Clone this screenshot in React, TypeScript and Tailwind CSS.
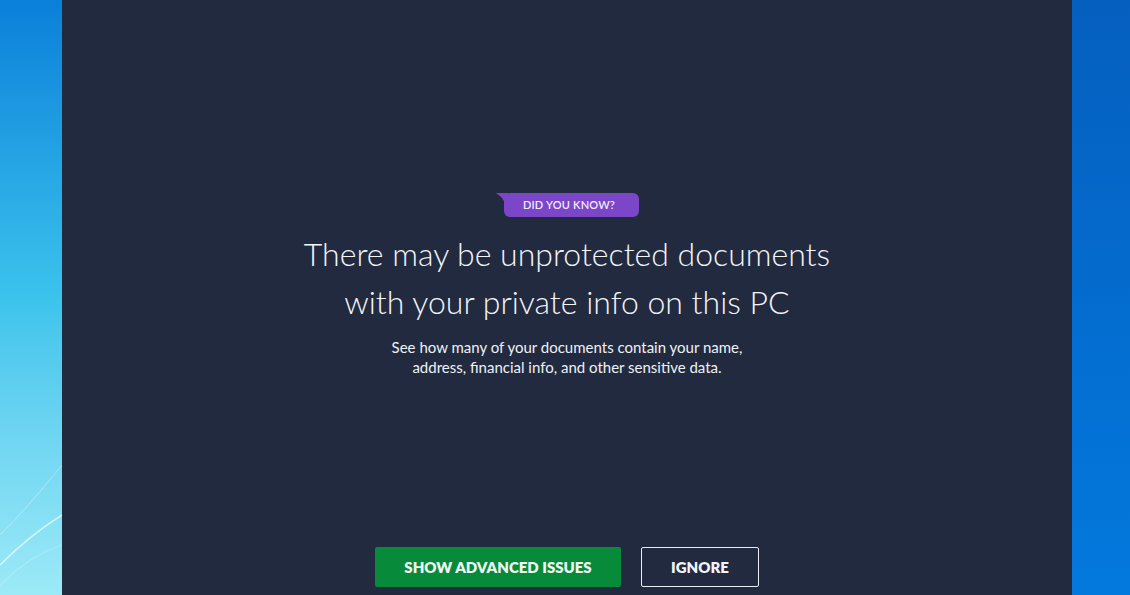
export default function App() {
  return (
    <div className="flex h-[595px] w-[1130px] overflow-hidden" style={{ fontFamily: "Lato, 'Open Sans', sans-serif" }}>
      {/* desktop left */}
      <div className="relative w-[62px] shrink-0 overflow-hidden bg-gradient-to-b from-[#0b7fd9] via-[#3cc3ec] to-[#9ceaf7]">
        <svg className="absolute bottom-0 left-0" width="62" height="200" viewBox="0 0 62 200">
          <path d="M0 170 Q30 140 62 120" stroke="rgba(255,255,255,0.6)" strokeWidth="1.5" fill="none" />
          <path d="M0 140 Q30 110 62 70" stroke="rgba(255,255,255,0.35)" strokeWidth="1" fill="none" />
          <path d="M0 190 Q30 160 62 150" stroke="rgba(255,255,255,0.25)" strokeWidth="1" fill="none" />
        </svg>
      </div>

      {/* main panel */}
      <div className="flex w-[1010px] shrink-0 flex-col items-center bg-[#222a40] pt-[193px] text-[#eef1f5]">
        <div className="relative ml-[8px] flex h-[24px] w-[135px] items-center justify-center rounded-[6px] bg-[#7b46c8] pr-[4px]">
          <svg className="absolute left-[-8px] top-0" width="12" height="20" viewBox="0 0 12 20">
            <path d="M0 0 L12 0 L12 20 Q10 6 0 0 Z" fill="#7b46c8" />
          </svg>
          <span className="text-[11px] font-semibold tracking-[0.2px] text-[#f1eaff]">DID YOU KNOW?</span>
        </div>

        <h1 className="mt-[13px] text-center text-[32px] font-light leading-[48px] text-[#f3f5f8]">
          There may be unprotected documents
          <br />
          with your private info on this PC
        </h1>

        <p className="mt-[11px] text-center text-[15px] leading-[20px] text-[#eef1f5]">
          See how many of your documents contain your name,
          <br />
          address, financial info, and other sensitive data.
        </p>

        <div className="mt-auto mb-[8px] flex gap-[20px]">
          <button className="h-[40px] w-[246px] rounded-[2px] bg-[#078a39] text-[15px] font-extrabold text-[#f1f6f2]">
            SHOW ADVANCED ISSUES
          </button>
          <button className="h-[40px] w-[118px] rounded-[2px] border border-[#e9edf3] text-[15px] font-extrabold text-[#f1f4f8]">
            IGNORE
          </button>
        </div>
      </div>

      {/* desktop right */}
      <div className="w-[58px] shrink-0 bg-gradient-to-b from-[#055fbf] to-[#0379de]" />
    </div>
  );
}
